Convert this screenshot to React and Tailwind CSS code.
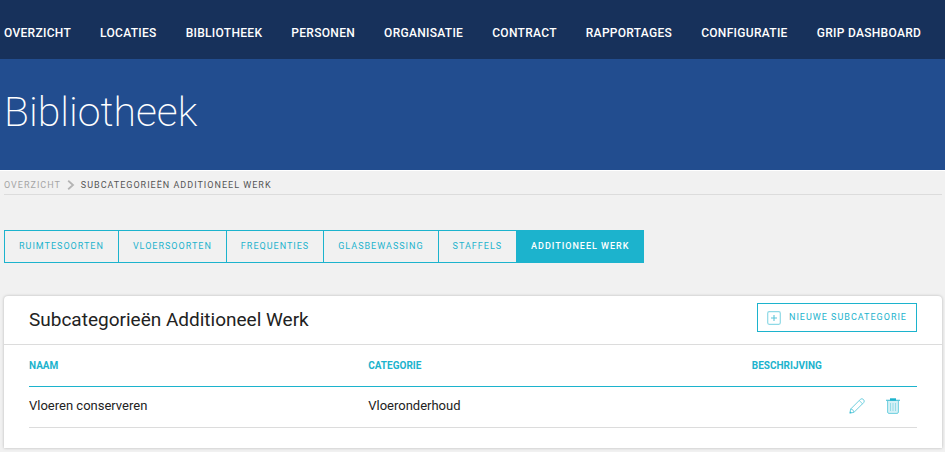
const navItems = [
  'Overzicht',
  'Locaties',
  'Bibliotheek',
  'Personen',
  'Organisatie',
  'Contract',
  'Rapportages',
  'Configuratie',
  'Grip Dashboard',
];

const tabs = [
  'Ruimtesoorten',
  'Vloersoorten',
  'Frequenties',
  'Glasbewassing',
  'Staffels',
  'Additioneel werk',
];

const rows = [
  { naam: 'Vloeren conserveren', categorie: 'Vloeronderhoud', beschrijving: '' },
];

const ChevronIcon = () => (
  <svg width="8" height="10" viewBox="0 0 8 10" fill="none" stroke="#b4b4b4" strokeWidth="1.8" aria-hidden="true">
    <path d="M1.2 0.8 L6 5 L1.2 9.2" />
  </svg>
);

const PlusIcon = () => (
  <svg width="14" height="14" viewBox="0 0 14 14" fill="none" aria-hidden="true">
    <rect x="0.7" y="0.7" width="12.6" height="12.6" rx="1.5" stroke="#8ed9e6" strokeWidth="1.2" />
    <path d="M7 4 V10 M4 7 H10" stroke="#5cc6d9" strokeWidth="1.1" />
  </svg>
);

const PencilIcon = () => (
  <svg width="16" height="16" viewBox="0 0 16 16" fill="none" stroke="#6fcfdf" strokeLinejoin="round" aria-hidden="true">
    <path d="M0.8 15.2 L1.7 11 L11.4 1.3 Q13 0 14.5 1.5 Q16 3 14.7 4.6 L5 14.3 Z" />
    <path d="M1.7 11 Q4.6 11.2 5 14.3 M10.2 2.5 L13.5 5.8" strokeWidth="0.9" />
    <path d="M0.8 15.2 L1.2 13.2 L2.8 14.8 Z" fill="#3bbdd2" stroke="none" />
  </svg>
);

const TrashIcon = () => (
  <svg width="14" height="16" viewBox="0 0 14 16" fill="none" aria-hidden="true">
    <path d="M1.6 2.5 V14 Q1.6 15.4 3 15.4 H11 Q12.4 15.4 12.4 14 V2.5 Z" fill="#d5f1f6" stroke="#6fcfdf" />
    <path d="M0 2.3 H14" stroke="#5cc6d9" strokeWidth="1.2" />
    <path d="M4 0.3 H10 V2.6 H4 Z" fill="#1cb3cd" />
    <path d="M4.5 5 V13 M7 5 V13 M9.5 5 V13" stroke="#8ed9e6" strokeWidth="0.9" />
  </svg>
);

const App = () => {
  return (
    <div className="min-h-screen bg-[#f1f1f1] font-['Roboto',sans-serif] text-[#222]">
      <header>
        <nav className="bg-[#17315b] px-1 pt-[25px] pb-[18px]">
          <ul className="flex gap-[29px] text-xs font-medium uppercase leading-4 tracking-wide text-white">
            {navItems.map((item) => (
              <li key={item} className="whitespace-nowrap">
                <a href="#">{item}</a>
              </li>
            ))}
          </ul>
        </nav>
        <div className="border-b border-white bg-[#224d8f] px-1 pt-[30px] pb-[35px]">
          <h1 className="text-[41px] font-extralight leading-[46px] text-white">Bibliotheek</h1>
        </div>
      </header>

      <main className="pr-[3px] pl-1">
        <nav
          aria-label="Kruimelpad"
          className="flex items-center gap-[6px] border-b border-[#dcdcdc] pt-2 pb-[3px] text-[9px] uppercase leading-3 tracking-[1px]"
        >
          <a href="#" className="text-[#a5a5a5]">Overzicht</a>
          <ChevronIcon />
          <span className="text-[#555]">Subcategorieën additioneel werk</span>
        </nav>

        <div className="mt-[35px] flex">
          <div className="flex border border-[#1cb3cd]">
            {tabs.map((tab) => {
              const active = tab === 'Additioneel werk';
              return (
                <button
                  key={tab}
                  type="button"
                  className={
                    'px-[14px] py-[9px] text-[9px] uppercase leading-[13px] tracking-[1px] whitespace-nowrap ' +
                    (active
                      ? 'bg-[#1cb3cd] font-medium text-white'
                      : 'border-r border-[#1cb3cd] text-[#1cb3cd]')
                  }
                >
                  {tab}
                </button>
              );
            })}
          </div>
        </div>

        <section className="mt-[33px] rounded-t bg-white pb-5 shadow-[0_0_3px_rgba(0,0,0,0.25)]">
          <div className="flex items-start justify-between border-b border-[#dcdcdc] px-[25px] pt-[7px] pb-3">
            <h2 className="pt-[5px] text-[19px] leading-6">Subcategorieën Additioneel Werk</h2>
            <button
              type="button"
              className="flex items-center gap-2 border border-[#1cb3cd] px-[9px] py-[6px] text-[9px] uppercase leading-[15px] tracking-[1px] text-[#1cb3cd]"
            >
              <PlusIcon />
              Nieuwe subcategorie
            </button>
          </div>

          <div className="px-[25px]">
            <table className="w-full table-fixed text-left">
              <thead>
                <tr className="border-b border-[#1cb3cd] text-[10px] uppercase leading-4 text-[#1cb3cd]">
                  <th className="w-[38.2%] pt-[13px] pb-3 font-bold">Naam</th>
                  <th className="w-[43.2%] pt-[13px] pb-3 font-bold">Categorie</th>
                  <th className="pt-[13px] pb-3 font-bold">Beschrijving</th>
                </tr>
              </thead>
              <tbody>
                {rows.map((row) => (
                  <tr key={row.naam} className="border-b border-[#dcdcdc] text-[13px] leading-4">
                    <td className="pt-[11px] pb-[13px]">{row.naam}</td>
                    <td className="pt-[11px] pb-[13px]">{row.categorie}</td>
                    <td className="pt-[11px] pb-[13px]">
                      <div className="flex items-center justify-end gap-[21px] pr-[17px]">
                        {row.beschrijving}
                        <button type="button" aria-label="Bewerken">
                          <PencilIcon />
                        </button>
                        <button type="button" aria-label="Verwijderen">
                          <TrashIcon />
                        </button>
                      </div>
                    </td>
                  </tr>
                ))}
              </tbody>
            </table>
          </div>
        </section>
      </main>
    </div>
  );
};

export default App;
